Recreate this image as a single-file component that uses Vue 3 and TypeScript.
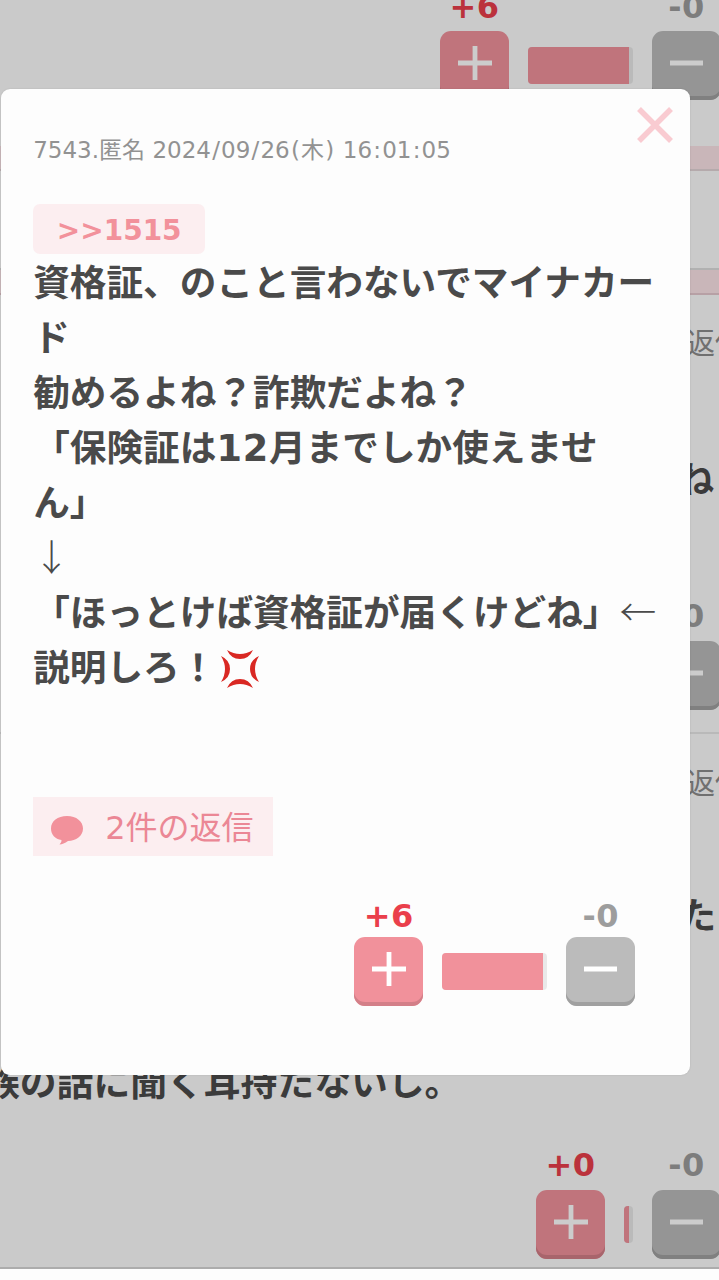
<script setup lang="ts">
import { defineComponent, h } from 'vue'

const VoteRow = defineComponent({
  props: {
    plus: { type: Number, required: true },
    minus: { type: Number, required: true },
    wide: { type: Boolean, default: true },
  },
  setup(props) {
    const button = (kind: string, count: string, path: string) =>
      h('div', { class: ['vote', kind] }, [
        h('div', { class: 'count' }, count),
        h('div', { class: 'button' }, [
          h('svg', { viewBox: '0 0 34 34', width: 34, height: 34 }, [
            h('path', { d: path, stroke: 'currentColor', 'stroke-width': 4.8, fill: 'none' }),
          ]),
        ]),
      ])
    return () =>
      h('div', { class: 'vote-row' }, [
        button('plus', '+' + props.plus, 'M0 17H34M17 0V34'),
        h('div', { class: ['meter', props.wide ? 'wide' : 'narrow'] }, [h('div', { class: 'fill' })]),
        button('minus', '-' + props.minus, 'M0 17H33'),
      ])
  },
})

const stamp: string[] = '7543.匿名 2024/09/26(木) 16:01:05'.split('')
const isMark = (c: string): boolean => '/:()'.includes(c)
</script>

<template>
  <div class="screen">
    <div class="feed">
      <section class="post first"><VoteRow :plus="6" :minus="0" /></section>
      <div class="band top"></div>
      <div class="gap"></div>
      <div class="band bottom"></div>
      <section class="post second">
        <div class="reply">返信</div>
        <div class="tail">ね</div>
        <VoteRow :plus="0" :minus="0" />
      </section>
      <section class="post third">
        <div class="reply">返信</div>
        <div class="tail">た</div>
        <div class="last-line">族の話に聞く耳持たないし。</div>
        <VoteRow :plus="0" :minus="0" :wide="false" />
      </section>
      <div class="shade"></div>
    </div>

    <article class="modal">
      <svg class="close" viewBox="0 0 36 36" width="36" height="36">
        <path d="M2 2L34 34M34 2L2 34" />
      </svg>
      <header class="stamp"><span v-for="(c, i) in stamp" :key="i" :class="{ mark: isMark(c) }">{{ c }}</span></header>
      <div class="anchor">&gt;&gt;1515</div>
      <div class="message">
        <p>資格証、のこと言わないでマイナカー</p>
        <p>ド</p>
        <p>勧めるよね？詐欺だよね？</p>
        <p>「保険証は<span class="number">12</span>月までしか使えませ</p>
        <p>ん」</p>
        <p><span class="arrow">↓</span></p>
        <p>「ほっとけば資格証が届くけどね」<span class="arrow">←</span></p>
        <p class="shout">説明しろ！<svg class="anger" viewBox="0 0 42 42" width="42" height="42">
          <path d="M8 2Q21 10 34 2Q30 11 21 11Q12 11 8 2Z" />
          <path d="M8 40Q21 32 34 40Q30 31 21 31Q12 31 8 40Z" />
          <path d="M2 8Q10 21 2 34Q11 30 11 21Q11 12 2 8Z" />
          <path d="M40 8Q32 21 40 34Q31 30 31 21Q31 12 40 8Z" />
        </svg></p>
      </div>
      <div class="replies">
        <svg viewBox="0 0 34 29" width="34" height="29">
          <path d="M17 0C26.500 0 33 5.500 33 12.500C33 20 26 25 18 25C15 27 12 28.500 9.500 28.500Q12 26 11.500 24C5 23 1 18.500 1 12.500C1 5 7.500 0 17 0Z" fill="#f2919b" />
        </svg>
        <span>2件の返信</span>
      </div>
      <VoteRow :plus="6" :minus="0" />
    </article>
  </div>
</template>

<style>
html, body { background: #fdfdfd; overflow: hidden; }
.vote-row { display: flex; justify-content: flex-end; align-items: flex-end; gap: 19px; }
.vote { width: 69px; flex: none; }
.vote .count { height: 42px; line-height: 42px; font-weight: 700; font-size: 32px; letter-spacing: .4px; text-align: center; color: #9d9d9d; }
.vote.plus .count { color: #ea3f4b; }
.feed .vote .count { line-height: 35px; }
.feed .first .vote .count { line-height: 36px; }
.vote .button { display: flex; justify-content: center; align-items: flex-start; height: 69px; box-sizing: border-box; padding-top: 15px; border-radius: 11px; color: #fff; background: #bbb; box-shadow: inset 0 -4px 0 #a0a0a0; }
.vote.plus .button { background: #f1919b; box-shadow: inset 0 -4px 0 #d37f88; }
.meter { height: 37px; margin-bottom: 16px; border-radius: 4px; overflow: hidden; background: #e9e9e9; flex: none; }
.meter.wide { width: 105px; }
.meter.narrow { width: 9px; }
.meter .fill { height: 100%; width: calc(100% - 4px); background: #f1919b; }
</style>

<style scoped>
.screen { position: relative; width: 719px; height: 1280px; overflow: hidden; background: #fdfdfd; font-family: "DejaVu Sans", "Noto Sans CJK JP", sans-serif; }
.feed { position: relative; width: 721px; height: 1269px; overflow: hidden; background: #fdfdfd; }
.shade { position: absolute; inset: 0; background: rgba(0, 0, 0, .2); }
.post { position: relative; box-sizing: border-box; }
.first { height: 146px; padding-top: 31px; }
.first :deep(.vote-row) { margin-top: -42px; }
.band { height: 25px; box-sizing: border-box; background: #fce4e8; }
.band.top { border-bottom: 2px solid #e3d5d8; }
.band.bottom { border-bottom: 2px solid #e5c9cf; }
.gap { height: 99px; box-sizing: border-box; border-bottom: 2px solid #dedede; }
.second { height: 439px; padding-top: 26px; border-bottom: 2px solid #e8e8e8; }
.third { height: 535px; padding-top: 27px; border-bottom: 2px solid #d8d8d8; }
.reply { height: 46px; line-height: 46px; padding-left: 686px; white-space: nowrap; font-size: 29px; color: #8c8c8c; }
.tail { height: 55px; margin-top: 86px; margin-right: 7px; line-height: 55px; text-align: right; font-size: 36.6px; font-weight: 700; color: #4a4a4a; }
.second :deep(.vote-row) { margin-top: 91px; }
.third .tail { margin-top: 82px; margin-right: 5px; }
.last-line { height: 55px; margin: 112px 0 0 -17px; line-height: 55px; white-space: nowrap; font-size: 36.8px; font-weight: 700; color: #4a4a4a; }
.third :deep(.vote-row) { margin-top: 37px; }

.modal { position: absolute; left: .7px; top: 88.5px; width: 689px; height: 986.500px; box-sizing: border-box; padding: 42px 32.500px 0; border-radius: 9px; background: #fdfdfd; box-shadow: 0 0 2px rgba(0, 0, 0, .12); }
.close { position: absolute; right: 16.500px; top: 18.500px; }
.close path { stroke: #f9cbd1; stroke-width: 5.500; fill: none; }
.stamp { height: 37px; line-height: 38px; font-size: 23px; color: #929292; white-space: pre; }
.mark { padding: 0 1.2px; }
.anchor { width: 172px; height: 50px; margin-top: 36px; border-radius: 7px; background: #fceef0; color: #f2919b; text-align: center; line-height: 53px; font-size: 28px; font-weight: 700; }
.message { height: 442px; box-sizing: border-box; padding-top: 2px; font-size: 36.65px; font-weight: 700; color: #4a4a4a; }
.message p { margin: 0; height: 55px; line-height: 55px; white-space: nowrap; }
.message .shout { display: flex; align-items: center; }
.number { letter-spacing: .8px; }
.arrow { font-family: "Noto Sans CJK JP", sans-serif; font-weight: 300; line-height: 1; }
.anger { margin: 2px 0 0 3px; }
.anger path { fill: #d92823; }
.replies { display: flex; align-items: center; width: 240px; height: 59px; box-sizing: border-box; margin-top: 101px; padding-left: 17px; gap: 21px; background: #fceef0; color: #eb8795; font-size: 32px; white-space: nowrap; line-height: 59px; }
.replies span { padding-top: 5px; }
.replies svg { margin-top: 8px; flex: none; }
.modal > .vote-row { margin: 39px 22px 0 0; }
</style>
